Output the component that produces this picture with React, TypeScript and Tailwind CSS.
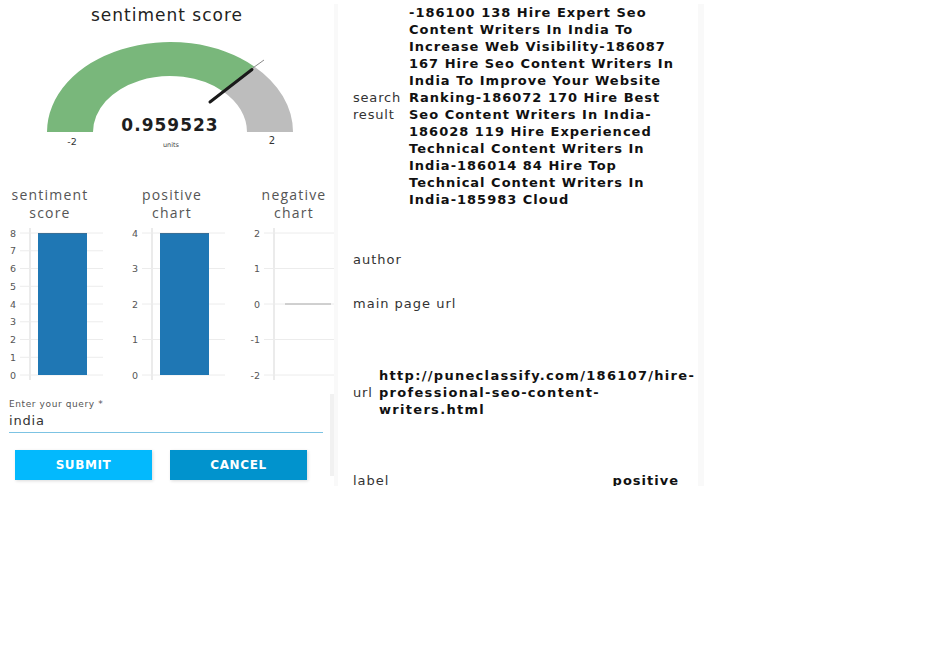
import React from "react";

const BLUE = "#1f77b4";

function BarChart({
  ticks,
  barTop,
  barBottom,
  showBar,
  zeroLine,
}: {
  ticks: string[];
  barTop: number;
  barBottom: number;
  showBar: boolean;
  zeroLine?: boolean;
}) {
  const top = 5;
  const bottom = 147;
  const step = (bottom - top) / (ticks.length - 1);
  return (
    <svg width="122" height="152" className="block">
      <line x1="30" y1="0" x2="30" y2="152" stroke="#e4e4e4" strokeWidth="1.5" />
      {ticks.map((t, i) => {
        const y = top + i * step;
        return (
          <g key={i}>
            <line x1="20" y1={y} x2="103" y2={y} stroke="#ececec" strokeWidth="1" />
            <text
              x="16"
              y={y + 3.5}
              textAnchor="end"
              fontSize="9.5"
              fill="#555"
              fontFamily="'DejaVu Sans', sans-serif"
            >
              {t}
            </text>
          </g>
        );
      })}
      {showBar && (
        <rect x="38" y={barTop} width="49" height={barBottom - barTop} fill={BLUE} />
      )}
      {showBar && <line x1="38" y1={barTop + 0.5} x2="87" y2={barTop + 0.5} stroke="#3a6f96" strokeWidth="1" />}
      {zeroLine && <line x1="41" y1={top + 2 * step} x2="87" y2={top + 2 * step} stroke="#aaa" strokeWidth="1" />}
    </svg>
  );
}

function ChartCol({ title1, title2, children }: { title1: string; title2: string; children: React.ReactNode }) {
  return (
    <div className="w-[122px] shrink-0 flex flex-col">
      <div className="w-[100px] text-center text-[14px] leading-[18px] text-[#555] font-['Open_Sans',sans-serif] tracking-[1.2px] whitespace-nowrap">
        <div>{title1}</div>
        <div>{title2}</div>
      </div>
      <div className="mt-[6px]">{children}</div>
    </div>
  );
}

function Gauge() {
  return (
    <svg width="334" height="126" className="block">
      <path d="M47 102 A123 90 0 0 1 254.2 36.4 L222.7 61.2 A77 56 0 0 0 93 102 Z" fill="#79b77b" />
      <path d="M254.2 36.4 A123 90 0 0 1 293 102 L247 102 A77 56 0 0 0 222.7 61.2 Z" fill="#bdbdbd" />
      <line x1="250" y1="40" x2="264" y2="30" stroke="#8a8a8a" strokeWidth="1" />
      <line x1="210" y1="72" x2="252" y2="39.5" stroke="#1a1a1a" strokeWidth="3" strokeLinecap="round" />
      <text
        x="170"
        y="101"
        textAnchor="middle"
        fontSize="17"
        fontWeight="700"
        fill="#1e1e1e"
        fontFamily="'DejaVu Sans', sans-serif"
        letterSpacing="1"
      >
        0.959523
      </text>
      <text x="72" y="115" textAnchor="middle" fontSize="9.5" fill="#333" fontFamily="'DejaVu Sans', sans-serif">
        -2
      </text>
      <text x="171" y="117" textAnchor="middle" fontSize="6.5" fill="#444" fontFamily="'DejaVu Sans', sans-serif">
        units
      </text>
      <text x="272" y="114" textAnchor="middle" fontSize="10" fill="#333" fontFamily="'DejaVu Sans', sans-serif">
        2
      </text>
    </svg>
  );
}

const searchLines = [
  "-186100 138 Hire Expert Seo",
  "Content Writers In India To",
  "Increase Web Visibility-186087",
  "167 Hire Seo Content Writers In",
  "India To Improve Your Website",
  "Ranking-186072 170 Hire Best",
  "Seo Content Writers In India-",
  "186028 119 Hire Experienced",
  "Technical Content Writers In",
  "India-186014 84 Hire Top",
  "Technical Content Writers In",
  "India-185983 Cloud",
];

const urlLines = ["http://puneclassify.com/186107/hire-", "professional-seo-content-", "writers.html"];

export default function App() {
  return (
    <div className="w-[947px] h-[645px] bg-white overflow-hidden">
      <div className="flex h-[486px] overflow-hidden bg-white">
        {/* left panel */}
        <div className="w-[334px] shrink-0 flex flex-col overflow-hidden">
          <div className="h-[30px] pt-[3px] text-center text-[17px] leading-[24px] text-[#222] font-['DejaVu_Sans',sans-serif] tracking-[1px]">
            sentiment score
          </div>
          <Gauge />
          <div className="flex mt-[30px] w-[366px]">
            <ChartCol title1="sentiment" title2="score">
              <BarChart ticks={["8", "7", "6", "5", "4", "3", "2", "1", "0"]} barTop={5} barBottom={147} showBar />
            </ChartCol>
            <ChartCol title1="positive" title2="chart">
              <BarChart ticks={["4", "3", "2", "1", "0"]} barTop={5} barBottom={147} showBar />
            </ChartCol>
            <ChartCol title1="negative" title2="chart">
              <BarChart ticks={["2", "1", "0", "-1", "-2"]} barTop={0} barBottom={0} showBar={false} zeroLine />
            </ChartCol>
          </div>
          <div className="flex mt-[14px]">
            <div className="w-[331px] pl-[9px] pr-[7px] pt-[4px]">
              <div className="text-[9px] leading-[12px] text-[#555] font-['DejaVu_Sans',sans-serif] tracking-[0.6px]">
                Enter your query *
              </div>
              <div className="mt-[3px] text-[13px] leading-[16px] text-[#333] font-['DejaVu_Sans',sans-serif] tracking-[0.8px]">
                india
              </div>
              <div className="mt-[3px] h-px bg-[#7cc3e3]" />
              <div className="flex gap-[18px] pl-[6px] mt-[17px]">
                <button className="w-[137px] h-[30px] bg-[#03b9fd] text-white text-[12px] font-bold tracking-[0.6px] font-['DejaVu_Sans',sans-serif] shadow-[1px_1px_3px_rgba(0,0,0,0.15)]">
                  SUBMIT
                </button>
                <button className="w-[137px] h-[30px] bg-[#0193cd] text-white text-[12px] font-bold tracking-[0.6px] font-['DejaVu_Sans',sans-serif] shadow-[1px_1px_3px_rgba(0,0,0,0.15)]">
                  CANCEL
                </button>
              </div>
            </div>
            <div className="w-[4px] h-[82px] bg-[#f1f1f1]" />
          </div>
        </div>
        <div className="w-[4px] shrink-0 mt-[4px] bg-[#f9f9f9]" />
        {/* right panel */}
        <div className="w-[360px] shrink-0 flex flex-col pl-[15px] pr-[19px] overflow-hidden font-['DejaVu_Sans',sans-serif]">
          <div className="h-[210px] mt-[4px] flex items-center">
            <div className="w-[56px] shrink-0 text-[13px] leading-[17px] text-[#333] tracking-[0.8px]">
              <div>search</div>
              <div>result</div>
            </div>
            <div className="text-[13px] leading-[17px] font-bold text-[#111] tracking-[1px]">
              {searchLines.map((l, i) => (
                <div key={i} className="whitespace-nowrap">
                  {l}
                </div>
              ))}
            </div>
          </div>
          <div className="h-[20px] mt-[42px] flex items-center text-[13px] text-[#333] tracking-[1px]">author</div>
          <div className="h-[20px] mt-[24px] flex items-center text-[13px] text-[#333] tracking-[1px]">
            main page url
          </div>
          <div className="h-[51px] mt-[54px] flex items-center">
            <div className="w-[26px] shrink-0 text-[13px] text-[#333] tracking-[0.8px]">url</div>
            <div className="text-[13px] leading-[17px] font-bold text-[#111] tracking-[1.3px]">
              {urlLines.map((l, i) => (
                <div key={i} className="whitespace-nowrap">
                  {l}
                </div>
              ))}
            </div>
          </div>
          <div className="h-[20px] mt-[53px] flex items-center justify-between text-[13px]">
            <span className="text-[#333] tracking-[1px]">label</span>
            <span className="font-bold text-[#111] tracking-[1px]">positive</span>
          </div>
        </div>
        <div className="w-[6px] shrink-0 mt-[4px] bg-[#f9f9f9]" />
      </div>
    </div>
  );
}
